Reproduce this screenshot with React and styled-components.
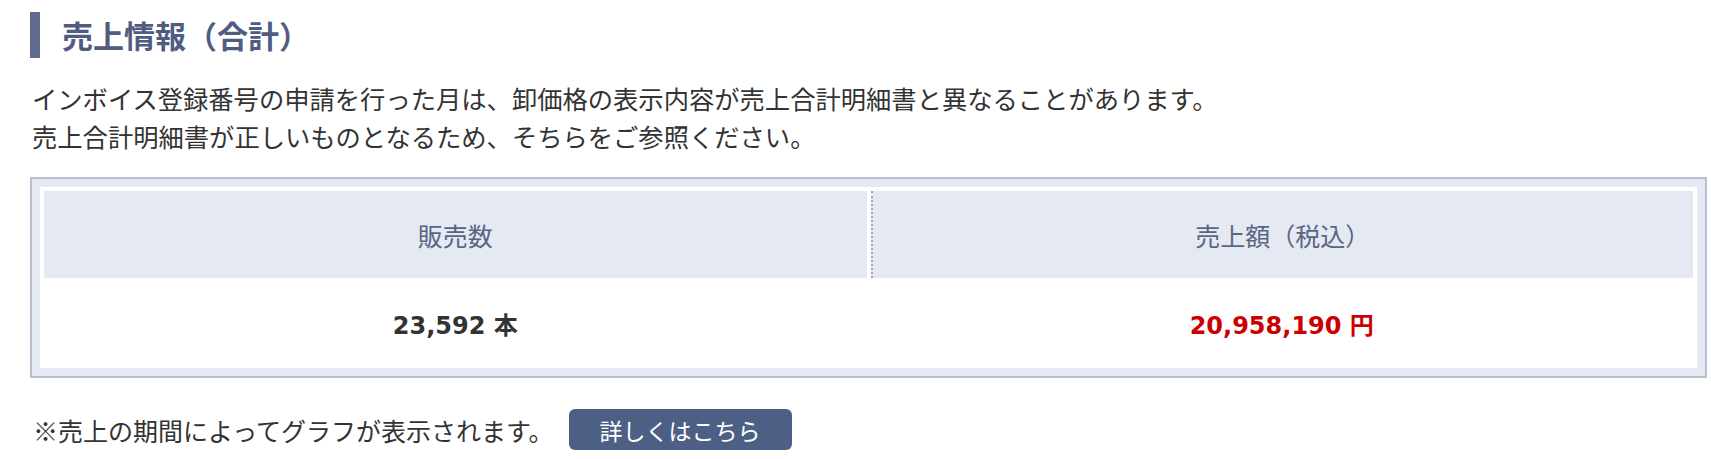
import React from "react";
import styled, { createGlobalStyle } from "styled-components";

const GlobalStyle = createGlobalStyle`
  body {
    margin: 0;
    background: #fff;
    font-family: "Noto Sans CJK JP", "Noto Sans", sans-serif;
    color: #333;
  }
`;

// ページ全体
const Page = styled.div`
  padding: 12px 4px 0 30px;
`;

const Heading = styled.h2`
  margin: 0;
  height: 46px;
  line-height: 46px;
  border-left: 10px solid #5f6a8e;
  padding-left: 22px;
  font-size: 31px;
  font-weight: bold;
  color: #505c80;
`;

const Note = styled.p`
  margin: 21px 0 0 2px;
  font-size: 25.3px;
  line-height: 38px;
  color: #333;
`;

// 集計テーブルの外枠
const SummaryBox = styled.div`
  margin-top: 22px;
  border: 2px solid #b8c0d0;
  background: #e5e9f2;
  padding: 8px;
`;

const SummaryTable = styled.table`
  width: 100%;
  table-layout: fixed;
  background: #fff;
  border-spacing: 4px;
`;

const HeadCell = styled.th`
  height: 87px;
  padding: 0;
  background: #e5e9f1;
  font-size: 25px;
  font-weight: normal;
  color: #5a6584;
  text-align: center;
  border-left: ${(p) => (p.$divider ? "2px dotted #9ba4ba" : "none")};
`;

const ValueCell = styled.td`
  height: 82px;
  padding: 0;
  text-align: center;
  font-family: "DejaVu Sans", "Noto Sans CJK JP", sans-serif;
  font-size: 24px;
  font-weight: bold;
  color: ${(p) => (p.$accent ? "#cc0000" : "#333")};
`;

const FooterRow = styled.div`
  display: flex;
  align-items: center;
  gap: 15px;
  margin-top: 31px;
`;

const FooterNote = styled.span`
  font-size: 25px;
  color: #333;
  padding-left: 3px;
`;

const DetailButton = styled.button`
  height: 41px;
  padding: 0 31px;
  border: none;
  border-radius: 6px;
  background: #4e5f86;
  color: #fff;
  font-family: inherit;
  font-size: 23px;
  cursor: pointer;
`;

const App = () => {
  return (
    <Page>
      <GlobalStyle />
      <Heading>売上情報（合計）</Heading>
      <Note>
        インボイス登録番号の申請を行った月は、卸価格の表示内容が売上合計明細書と異なることがあります。
        <br />
        売上合計明細書が正しいものとなるため、そちらをご参照ください。
      </Note>

      <SummaryBox>
        <SummaryTable>
          <thead>
            <tr>
              <HeadCell>販売数</HeadCell>
              <HeadCell $divider>売上額（税込）</HeadCell>
            </tr>
          </thead>
          <tbody>
            <tr>
              <ValueCell>23,592 本</ValueCell>
              <ValueCell $accent>20,958,190 円</ValueCell>
            </tr>
          </tbody>
        </SummaryTable>
      </SummaryBox>

      <FooterRow>
        <FooterNote>※売上の期間によってグラフが表示されます。</FooterNote>
        <DetailButton type="button">詳しくはこちら</DetailButton>
      </FooterRow>
    </Page>
  );
};

export default App;
